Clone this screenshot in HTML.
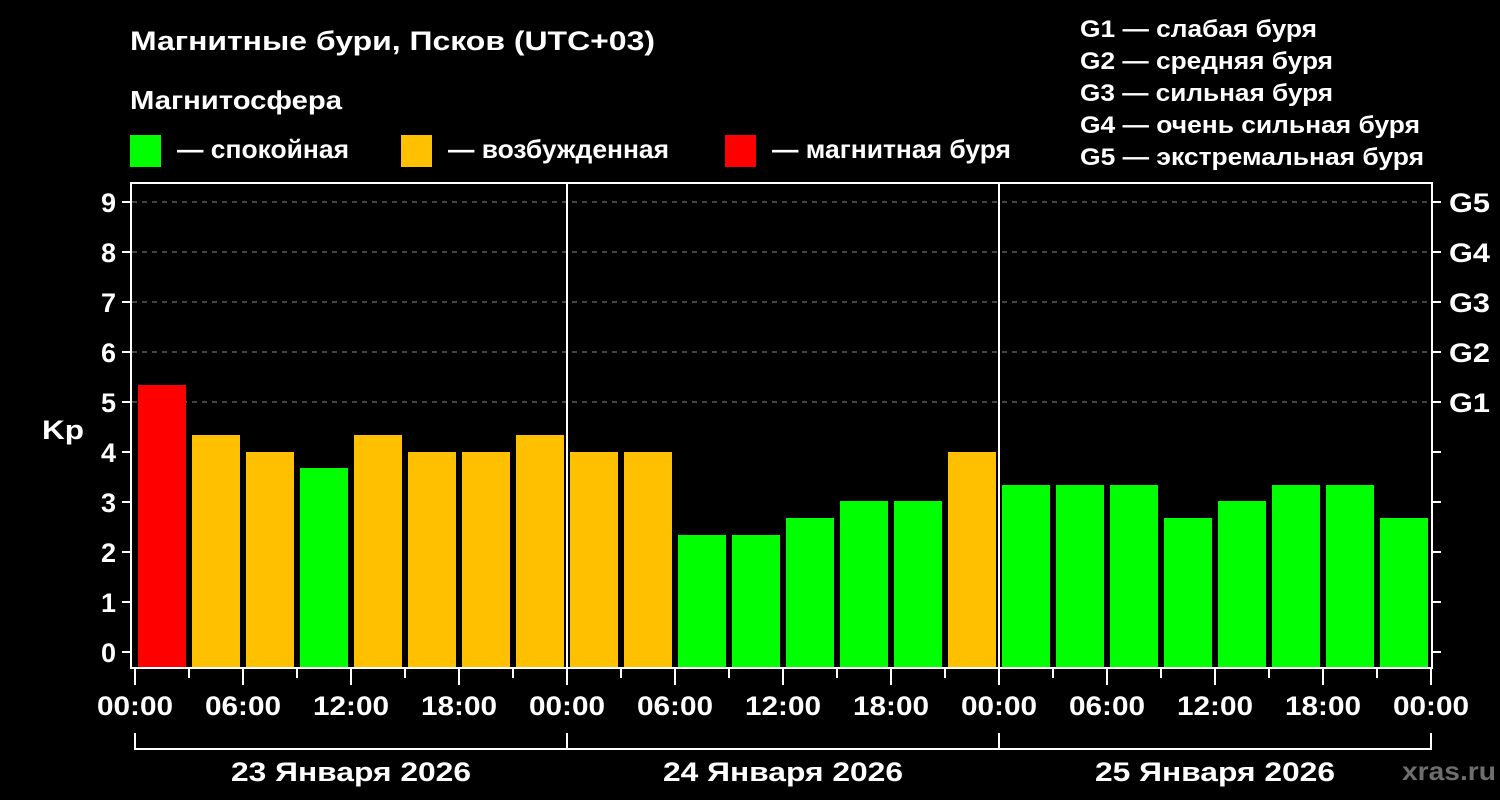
<!DOCTYPE html>
<html><head><meta charset="utf-8"><style>
html,body{margin:0;padding:0;background:#000;width:1500px;height:800px;overflow:hidden}
svg text{font-family:"Liberation Sans",sans-serif;font-weight:bold;fill:#fff}
</style></head><body>
<svg width="1500" height="800" viewBox="0 0 1500 800" xmlns="http://www.w3.org/2000/svg">
<rect width="1500" height="800" fill="#000"/>
<text x="130" y="50" font-size="27" textLength="525" lengthAdjust="spacingAndGlyphs">Магнитные бури, Псков (UTC+03)</text>
<text x="130" y="109" font-size="26" textLength="212" lengthAdjust="spacingAndGlyphs">Магнитосфера</text>
<rect x="130" y="135" width="31" height="32" fill="#00ff00"/>
<text x="177" y="158" font-size="26" textLength="172" lengthAdjust="spacingAndGlyphs">— спокойная</text>
<rect x="401" y="135" width="31" height="32" fill="#ffc000"/>
<text x="448" y="158" font-size="26" textLength="221" lengthAdjust="spacingAndGlyphs">— возбужденная</text>
<rect x="725" y="135" width="31" height="32" fill="#ff0000"/>
<text x="772" y="158" font-size="26" textLength="239" lengthAdjust="spacingAndGlyphs">— магнитная буря</text>
<g font-size="24" lengthAdjust="spacingAndGlyphs">
<text x="1080" y="37" textLength="237" lengthAdjust="spacingAndGlyphs">G1 — слабая буря</text>
<text x="1080" y="69" textLength="253" lengthAdjust="spacingAndGlyphs">G2 — средняя буря</text>
<text x="1080" y="101" textLength="253" lengthAdjust="spacingAndGlyphs">G3 — сильная буря</text>
<text x="1080" y="133" textLength="340" lengthAdjust="spacingAndGlyphs">G4 — очень сильная буря</text>
<text x="1080" y="165" textLength="344" lengthAdjust="spacingAndGlyphs">G5 — экстремальная буря</text>
</g>
<g stroke="#888" stroke-width="1" stroke-dasharray="5,5">
<line x1="132" y1="202" x2="1432" y2="202"/>
<line x1="132" y1="252" x2="1432" y2="252"/>
<line x1="132" y1="302" x2="1432" y2="302"/>
<line x1="132" y1="352" x2="1432" y2="352"/>
<line x1="132" y1="402" x2="1432" y2="402"/>
</g>
<g>
<rect x="138" y="385" width="48" height="283" fill="#ff0000"/>
<rect x="192" y="435" width="48" height="233" fill="#ffc000"/>
<rect x="246" y="452" width="48" height="216" fill="#ffc000"/>
<rect x="300" y="468" width="48" height="200" fill="#00ff00"/>
<rect x="354" y="435" width="48" height="233" fill="#ffc000"/>
<rect x="408" y="452" width="48" height="216" fill="#ffc000"/>
<rect x="462" y="452" width="48" height="216" fill="#ffc000"/>
<rect x="516" y="435" width="48" height="233" fill="#ffc000"/>
<rect x="570" y="452" width="48" height="216" fill="#ffc000"/>
<rect x="624" y="452" width="48" height="216" fill="#ffc000"/>
<rect x="678" y="535" width="48" height="133" fill="#00ff00"/>
<rect x="732" y="535" width="48" height="133" fill="#00ff00"/>
<rect x="786" y="518" width="48" height="150" fill="#00ff00"/>
<rect x="840" y="501" width="48" height="167" fill="#00ff00"/>
<rect x="894" y="501" width="48" height="167" fill="#00ff00"/>
<rect x="948" y="452" width="48" height="216" fill="#ffc000"/>
<rect x="1002" y="485" width="48" height="183" fill="#00ff00"/>
<rect x="1056" y="485" width="48" height="183" fill="#00ff00"/>
<rect x="1110" y="485" width="48" height="183" fill="#00ff00"/>
<rect x="1164" y="518" width="48" height="150" fill="#00ff00"/>
<rect x="1218" y="501" width="48" height="167" fill="#00ff00"/>
<rect x="1272" y="485" width="48" height="183" fill="#00ff00"/>
<rect x="1326" y="485" width="48" height="183" fill="#00ff00"/>
<rect x="1380" y="518" width="48" height="150" fill="#00ff00"/>
</g>
<g stroke="#fff" stroke-width="2" fill="none">
<rect x="131" y="183" width="1301" height="485"/>
<line x1="567" y1="183" x2="567" y2="668"/>
<line x1="999" y1="183" x2="999" y2="668"/>
<path d="M122 202H131M122 252H131M122 302H131M122 352H131M122 402H131M122 452H131M122 502H131M122 552H131M122 602H131M122 652H131"/>
<path d="M1432 202H1441M1432 252H1441M1432 302H1441M1432 352H1441M1432 402H1441M1432 452H1441M1432 502H1441M1432 552H1441M1432 602H1441M1432 652H1441"/>
<path d="M135 668V685M243 668V685M351 668V685M459 668V685M567 668V685M675 668V685M783 668V685M891 668V685M999 668V685M1107 668V685M1215 668V685M1323 668V685M1431 668V685"/>
<path d="M189 668V678M297 668V678M405 668V678M513 668V678M621 668V678M729 668V678M837 668V678M945 668V678M1053 668V678M1161 668V678M1269 668V678M1377 668V678"/>
<path d="M135 733V749H1431V733M567 733V749M999 733V749"/>
</g>
<g font-size="27" text-anchor="end">
<text x="116" y="212">9</text><text x="116" y="262">8</text><text x="116" y="312">7</text><text x="116" y="362">6</text><text x="116" y="412">5</text><text x="116" y="462">4</text><text x="116" y="512">3</text><text x="116" y="562">2</text><text x="116" y="612">1</text><text x="116" y="662">0</text>
</g>
<text x="42" y="439" font-size="27" textLength="42" lengthAdjust="spacingAndGlyphs">Kp</text>
<g font-size="27">
<text x="1449" y="212" textLength="41" lengthAdjust="spacingAndGlyphs">G5</text><text x="1449" y="262" textLength="41" lengthAdjust="spacingAndGlyphs">G4</text><text x="1449" y="312" textLength="41" lengthAdjust="spacingAndGlyphs">G3</text><text x="1449" y="362" textLength="41" lengthAdjust="spacingAndGlyphs">G2</text><text x="1449" y="412" textLength="41" lengthAdjust="spacingAndGlyphs">G1</text>
</g>
<g font-size="27">
<text x="97" y="715" textLength="76" lengthAdjust="spacingAndGlyphs">00:00</text><text x="205" y="715" textLength="76" lengthAdjust="spacingAndGlyphs">06:00</text><text x="313" y="715" textLength="76" lengthAdjust="spacingAndGlyphs">12:00</text><text x="421" y="715" textLength="76" lengthAdjust="spacingAndGlyphs">18:00</text>
<text x="529" y="715" textLength="76" lengthAdjust="spacingAndGlyphs">00:00</text><text x="637" y="715" textLength="76" lengthAdjust="spacingAndGlyphs">06:00</text><text x="745" y="715" textLength="76" lengthAdjust="spacingAndGlyphs">12:00</text><text x="853" y="715" textLength="76" lengthAdjust="spacingAndGlyphs">18:00</text>
<text x="961" y="715" textLength="76" lengthAdjust="spacingAndGlyphs">00:00</text><text x="1069" y="715" textLength="76" lengthAdjust="spacingAndGlyphs">06:00</text><text x="1177" y="715" textLength="76" lengthAdjust="spacingAndGlyphs">12:00</text><text x="1285" y="715" textLength="76" lengthAdjust="spacingAndGlyphs">18:00</text>
<text x="1393" y="715" textLength="76" lengthAdjust="spacingAndGlyphs">00:00</text>
<text x="231" y="781" textLength="240" lengthAdjust="spacingAndGlyphs">23 Января 2026</text>
<text x="663" y="781" textLength="240" lengthAdjust="spacingAndGlyphs">24 Января 2026</text>
<text x="1095" y="781" textLength="240" lengthAdjust="spacingAndGlyphs">25 Января 2026</text>
</g>
<text x="1402" y="780" font-size="26" textLength="94" lengthAdjust="spacingAndGlyphs" style="fill:#6e6e6e">xras.ru</text>
</svg>
</body></html>
